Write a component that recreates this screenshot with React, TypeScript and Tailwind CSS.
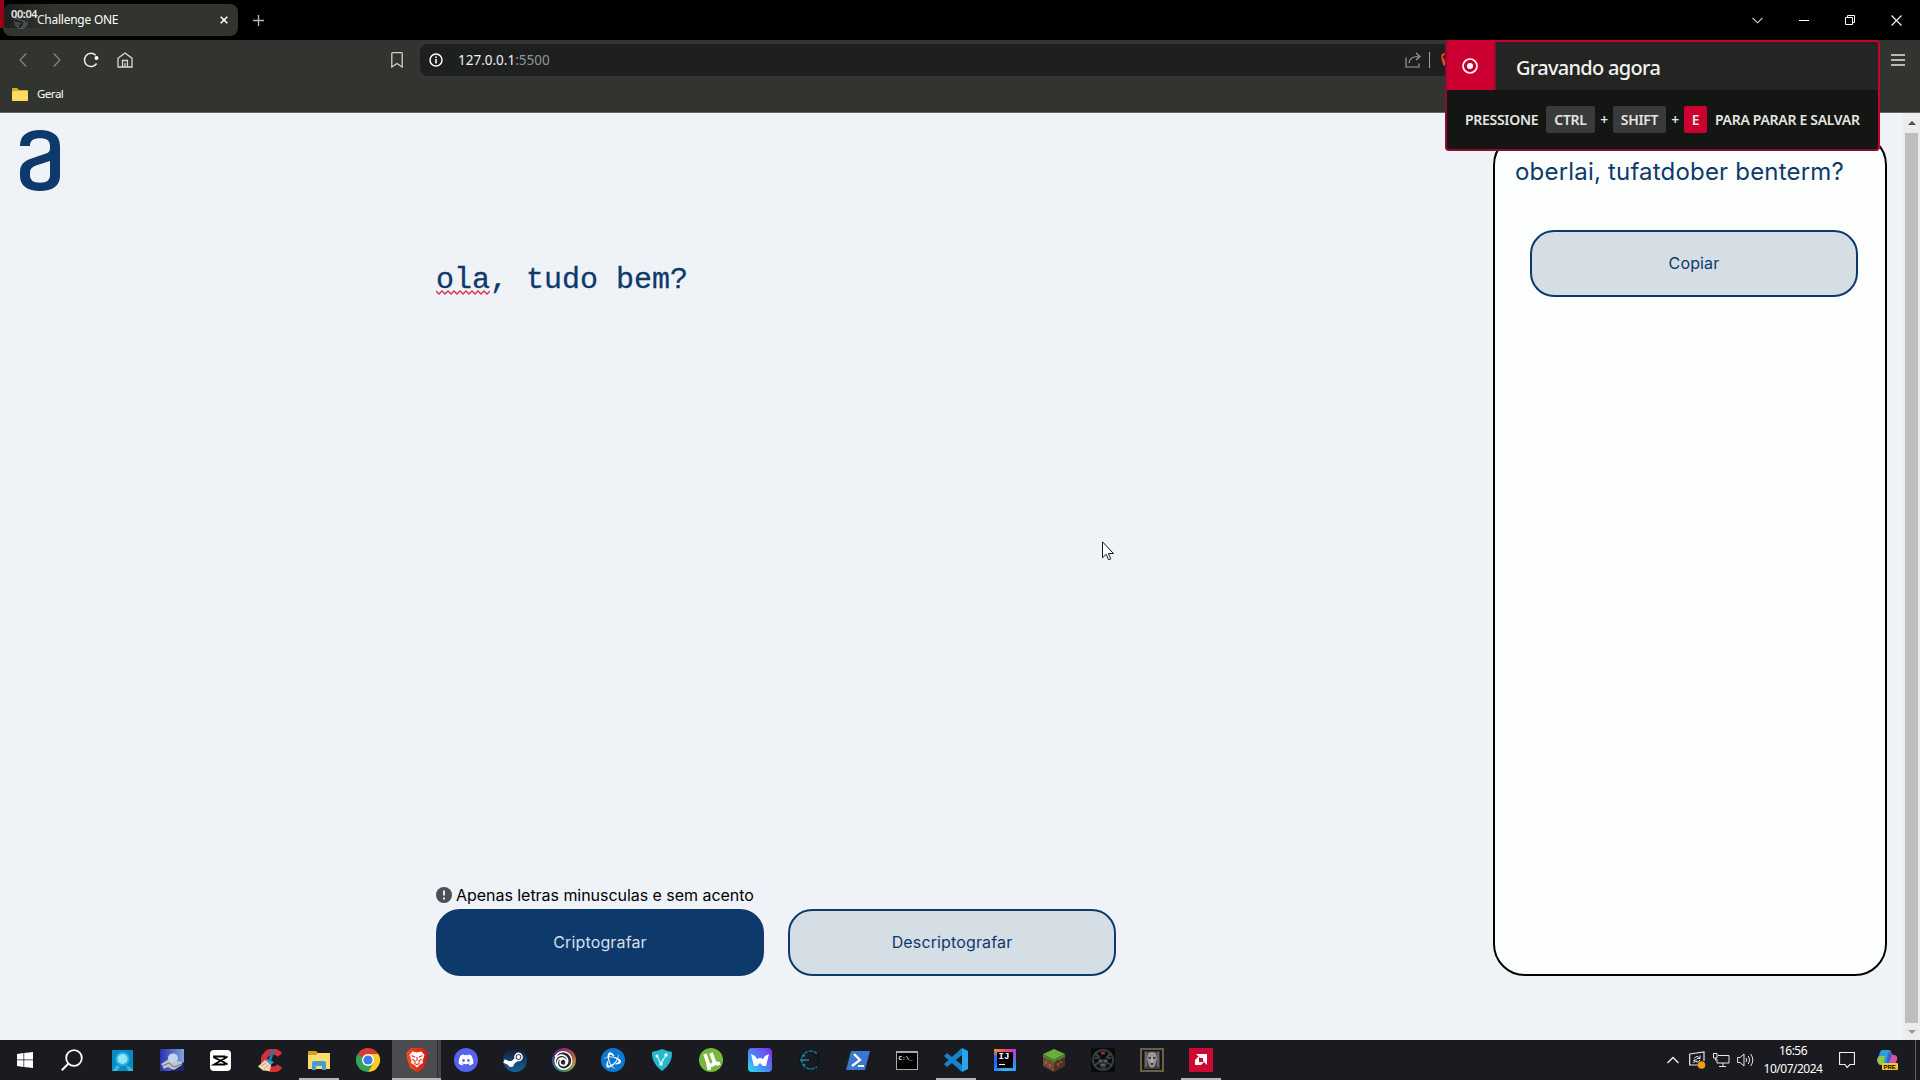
import React from "react";
import { FaDiscord } from "react-icons/fa";
import { SiBrave, SiUbisoft, SiBattledotnet } from "react-icons/si";

function TopBar() {
  return (
    <div className="flex h-10 shrink-0 items-center bg-black text-white">
      <div className="relative ml-[3px] flex h-8 w-[235px] items-center rounded-lg bg-[#323430] pl-[11px]">
        <svg width="14" height="14" viewBox="0 0 14 14" className="mt-1">
          <circle cx="7" cy="7" r="7" fill="#62676b" />
          <path d="M1 6c3-1 4 1 6 1s1 3 0 3-1 2-1 3M8 1c-2 2 0 3 2 3s2 2 3 3" stroke="#2b2d2b" strokeWidth="2" fill="none" />
        </svg>
        <span className="ml-[9px] text-[12px] tracking-[-0.25px]">Challenge ONE</span>
        <svg width="8" height="8" viewBox="0 0 8 8" className="ml-auto mr-[10px]">
          <path d="M.7.7l6.6 6.6M7.3.7L.7 7.3" stroke="#fff" strokeWidth="1.6" />
        </svg>
      </div>
      <svg width="11" height="11" viewBox="0 0 11 11" className="ml-[15px]">
        <path d="M5.5 0v11M0 5.5h11" stroke="#b4b4b4" strokeWidth="1.4" />
      </svg>
      <div className="ml-auto flex items-center">
        <svg width="11" height="7" viewBox="0 0 11 7" className="mr-9">
          <path d="M.5.8l5 5 5-5" stroke="#d8d8d8" fill="none" strokeWidth="1.1" />
        </svg>
        <svg width="10" height="10" viewBox="0 0 10 10" className="mr-9">
          <path d="M0 5.5h10" stroke="#fff" />
        </svg>
        <svg width="10" height="10" viewBox="0 0 10 10" className="mr-9">
          <path d="M.5 2.5h7v7h-7zM2.5 2.500V.5h7v7H7.500" stroke="#fff" fill="none" />
        </svg>
        <svg width="11" height="11" viewBox="0 0 11 11" className="mr-[18px]">
          <path d="M.5.5l10 10M10.500.5l-10 10" stroke="#fff" strokeWidth="1.1" />
        </svg>
      </div>
    </div>
  );
}

function Toolbar() {
  return (
    <div className="h-[73px] shrink-0 border-b border-[#63656a] bg-[#323430] pt-1 text-white">
      <div className="flex h-8 items-center">
        <svg width="8" height="14" viewBox="0 0 8 14" className="ml-[19px]">
          <path d="M7.300.5L1 7l6.300 6.500" stroke="#84868a" fill="none" strokeWidth="1.2" />
        </svg>
        <svg width="8" height="14" viewBox="0 0 8 14" className="ml-[26px]">
          <path d="M.7.5L7 7 .7 13.500" stroke="#84868a" fill="none" strokeWidth="1.2" />
        </svg>
        <svg width="16" height="16" viewBox="0 0 16 16" className="ml-[22px]">
          <path d="M12.700 3.300A6.600 6.600 0 1 0 13.600 11.500" stroke="#eee" fill="none" strokeWidth="1.5" />
          <circle cx="13.500" cy="6" r="2" fill="#fff" />
        </svg>
        <svg width="16" height="16" viewBox="0 0 16 16" className="ml-[18px]">
          <path d="M1 6.200L8 1l7 5.200V15H1zM5.500 15V8.500h5V15M8 15v-4" stroke="#d8d8d8" fill="none" strokeWidth="1.3" />
        </svg>
        <svg width="12" height="16" viewBox="0 0 12 16" className="ml-[258px]">
          <path d="M.8 1.500Q.8.7 1.600.7h8.800q.8 0 .8.8V15L6 11.500.8 15z" stroke="#d0d0d0" fill="none" strokeWidth="1.3" />
        </svg>
        <div className="ml-[17px] flex h-8 w-[1100px] items-center rounded-lg bg-[#1d201f] pl-[9px]">
          <svg width="14" height="14" viewBox="0 0 14 14">
            <circle cx="7" cy="7" r="6" stroke="#fff" fill="none" strokeWidth="1.500" />
            <path d="M7 6v4.500M7 3.500v1.500" stroke="#fff" strokeWidth="1.600" />
          </svg>
          <span className="ml-[15px] text-[13.5px] text-[#f0f0f0]">
            127.0.0.1<span className="text-[#929492]">:5500</span>
          </span>
          <svg width="16" height="16" viewBox="0 0 16 16" className="ml-[855px]">
            <path d="M1 5.500V15h13v-3.500M4 11c.3-4.500 3-6.500 9.500-6.500M11 1l4 3.500L11 8" stroke="#9b9d9b" fill="none" strokeWidth="1.2" />
          </svg>
          <div className="ml-2 h-4 w-px bg-[#a0a0a0]" />
          <SiBrave className="ml-[10px] text-[#f24a1c]" size={16} />
        </div>
        <svg width="14" height="12" viewBox="0 0 14 12" className="ml-auto mr-[15px]">
          <path d="M0 1h14M0 6h14M0 11h14" stroke="#e4e4e4" strokeWidth="1.3" />
        </svg>
      </div>
      <div className="flex h-9 items-center pl-3">
        <svg width="16" height="13" viewBox="0 0 16 13">
          <path d="M0 1q0-1 1-1h4l2 2h8q1 0 1 1v9q0 1-1 1H1q-1 0-1-1z" fill="#d9a929" />
          <path d="M0 4q0-1 1-1h14q1 0 1 1v8q0 1-1 1H1q-1 0-1-1z" fill="#fbdc5e" />
        </svg>
        <span className="ml-[9px] text-[11.500px] tracking-[-0.5px]">Geral</span>
      </div>
    </div>
  );
}

const pill = "flex h-[67px] w-[328px] items-center justify-center rounded-3xl border-2 border-[#0d3a6b] pb-0.5 text-base tracking-[0.14px]";

function Page() {
  return (
    <div className="flex min-h-0 flex-1 bg-[#eff3f8]">
      <div className="w-[436px] pl-5 pt-[17px]">
        <svg width="40" height="61" viewBox="0 0 40 61" fill="#0d3a6b">
          <path
            fillRule="evenodd"
            d="M0 16C0 5 8 0 20 0s20 5 20 16v30c0 10-8 15-20 15S0 56 0 46v-4c0-8 5-11 10-13l16-5.500c3-1 4-2.500 4-5.500v-2c0-5.500-3.500-7.700-10-7.700S10 10.500 10 16zM30 31l-14 4.500c-4 1.500-6 3.500-6 6.500v3c0 5.500 3.500 7.700 10 7.700s10-2.200 10-7.700z"
          />
        </svg>
      </div>
      <main className="flex w-[680px] flex-col font-['Inter',sans-serif]">
        <div className="mt-[149px] whitespace-pre font-['Liberation_Mono',monospace] text-[30px] leading-9 text-[#0d3a6b] [-webkit-text-stroke:0.3px_#0d3a6b]">
          <span className="relative inline-block">
            ola
            <svg className="absolute left-0 top-[28px]" width="54" height="5" viewBox="0 0 54 5">
              <path d="M0 1l3 3 3-3 3 3 3-3 3 3 3-3 3 3 3-3 3 3 3-3 3 3 3-3 3 3 3-3 3 3 3-3 3 3 3-3" stroke="#d2344a" fill="none" strokeWidth="1.300" />
            </svg>
          </span>
          , tudo bem?
        </div>
        <div className="mt-auto flex h-7 items-center text-base tracking-[-0.04px] text-black">
          <svg width="16" height="16" viewBox="0 0 16 16" className="mr-1">
            <circle cx="8" cy="8" r="8" fill="#495057" />
            <path d="M8 3.500v5M8 10.500v2" stroke="#eff3f8" strokeWidth="1.900" />
          </svg>
          Apenas letras minusculas e sem acento
        </div>
        <div className="mb-16 flex gap-6">
          <button className={`${pill} bg-[#0d3a6b] text-[#d8dfe8]`}>Criptografar</button>
          <button className={`${pill} bg-[#d5dde5] text-[#0d3a6b]`}>Descriptografar</button>
        </div>
      </main>
      <section className="mb-16 ml-auto mr-4 mt-5 flex w-[394px] flex-col rounded-[32px] border-2 border-black bg-[#fdfffe] pt-[21px] font-['Inter',sans-serif] text-[#0d3a6b]">
        <p className="whitespace-nowrap pl-5 text-2xl leading-8 tracking-[0.19px]">oberlai, tufatdober benterm?</p>
        <button className={`${pill} ml-[35px] mt-[42px] bg-[#d5dde5]`}>Copiar</button>
      </section>
      <div className="flex w-[17px] flex-col items-center bg-[#ebedec]">
        <div className="flex h-5 items-center">
          <svg width="8" height="4" viewBox="0 0 8 4"><path d="M4 0l4 4H0z" fill="#4d4f4e" /></svg>
        </div>
        <div className="w-[13px] flex-1 bg-[#bcbfbc]" />
        <div className="flex h-[17px] items-center">
          <svg width="8" height="4" viewBox="0 0 8 4"><path d="M0 0h8L4 4z" fill="#9a9c9b" /></svg>
        </div>
      </div>
    </div>
  );
}

function Disc({ children, className }: { children: React.ReactNode; className: string }) {
  return <div className={`flex size-6 items-center justify-center text-white ${className}`}>{children}</div>;
}

const icons: { node: React.ReactNode; state?: "open" | "active" }[] = [
  { node: <svg width="16" height="16" viewBox="0 0 16 16" fill="#fff"><path d="M0 2l6.500-1v6.500H0zM7.200.9L16 0v7.500H7.200zM0 8.200h6.500V15L0 14zM7.200 8.200H16V16l-8.800-1z" /></svg> },
  { node: <svg width="22" height="22" viewBox="0 0 22 22" className="-translate-x-0.5"><circle cx="13" cy="9" r="7.800" stroke="#fff" strokeWidth="1.800" fill="none" /><path d="M7.500 14.500L.8 21.200" stroke="#fff" strokeWidth="2" /></svg> },
  { node: <svg width="21" height="21" viewBox="0 0 21 21"><path d="M0 0h21v21H0z" fill="#078bc0" /><path d="M0 21l5-6 3 2-3 4zM14 15l7 4v2h-5z" fill="#35b7dd" /><circle cx="10.500" cy="9" r="7" fill="#27b5df" /><circle cx="10.500" cy="9" r="5" fill="#8fe4f5" /></svg> },
  { node: <svg width="24" height="22" viewBox="0 0 24 22"><defs><linearGradient id="drive"><stop stopColor="#2c2fae" /><stop offset="1" stopColor="#7fa5dc" /></linearGradient></defs><path d="M0 0h24v22H0z" fill="url(#drive)" /><path d="M10 22l14-9v9z" fill="#1c2468" /><path d="M1 15l8-5 13 3v3l-8 5-6-3-4 2z" fill="#bfc3ca" /><path d="M2 17l7-3 5 4 8-3" stroke="#6b7080" fill="none" /><ellipse cx="13" cy="9" rx="5" ry="4.500" fill="#c6d5ee" /></svg> },
  { node: <svg width="21" height="21" viewBox="0 0 21 21"><rect width="21" height="21" rx="4" fill="#fff" /><path d="M4 6.500h10.500v2L4 14.500h10.500v-2L4 7.500zM14.500 8.500l3-2M14.500 12.500l3 2" stroke="#000" strokeWidth="1.800" fill="none" /></svg> },
  { node: <svg width="24" height="23" viewBox="0 0 24 23"><path d="M22 6A9 9 0 1 0 22 17" stroke="#d2323a" strokeWidth="6" fill="none" /><path d="M15 1l-3 10" stroke="#2278a9" strokeWidth="3" /><path d="M9 10l7 3-3 3-5-4z" fill="#399bcd" /><path d="M7 11l6 5-1 6-7-.5-5-4z" fill="#f2d8b4" /><path d="M3 17l5-3M6 20l4-4" stroke="#c99f79" /></svg> },
  { state: "open", node: <svg width="22" height="19" viewBox="0 0 22 19"><path d="M0 0h8l2 2h12v16H0z" fill="#d89b1f" /><path d="M0 4h8l2-2h12v16H0z" fill="#fddc6c" /><path d="M4 19v-7q0-2 2-2h10q2 0 2 2v7h-4v-4H8v4z" fill="#409fd5" /></svg> },
  { node: <svg width="24" height="24" viewBox="0 0 24 24"><path d="M12 12L1.600 6A12 12 0 0 1 22.400 6z" fill="#db3b30" /><path d="M12 12L1.600 6A12 12 0 0 0 12 24l5-9z" fill="#35a352" /><path d="M12 6h10.400A12 12 0 0 1 12 24l5.200-9z" fill="#fccb24" /><circle cx="12" cy="12" r="6" fill="#fff" /><circle cx="12" cy="12" r="4.600" fill="#3c7be8" /></svg> },
  { state: "active", node: <svg width="22" height="24" viewBox="0 0 22 24"><defs><linearGradient id="lion"><stop stopColor="#f4511e" /><stop offset="1" stopColor="#d9160f" /></linearGradient></defs><path d="M5 0h12l2 2 3 3-1 3 .5 1L18 20l-7 4-7-4L.5 9 1 8 0 5l3-3z" fill="url(#lion)" /><path d="M6.500 3.500l4.500 1 4.500-1L18.500 7l-2 5.500.5 2.500-3.500 2-2.500 2.500L8.500 17 5 15l.5-2.500-2-5.500z" fill="#fff" /><path d="M5.500 7.500l3.700 1.700M16.500 7.500l-3.700 1.700M6.500 11l2.500 2v2M15.500 11L13 13v2M8.500 15.500l2.500 1 2.500-1M11 9v4" stroke="#e6391b" fill="none" strokeWidth="1.200" /></svg> },
  { node: <Disc className="rounded-full bg-[#5662f0]"><FaDiscord size={16} /></Disc> },
  { node: <svg width="24" height="24" viewBox="0 0 24 24"><defs><linearGradient id="valve" x2="0" y2="1"><stop stopColor="#141a35" /><stop offset="1" stopColor="#12659a" /></linearGradient></defs><circle cx="12" cy="12" r="12" fill="url(#valve)" /><path d="M1 13l7 3 6-5" stroke="#fff" strokeWidth="4" fill="none" /><circle cx="8" cy="16" r="3" fill="#fff" /><circle cx="15.500" cy="9" r="3.600" stroke="#fff" strokeWidth="1.600" fill="#182545" /><circle cx="15.500" cy="9" r="2" fill="#fff" /></svg> },
  { node: <Disc className="rounded-full bg-[conic-gradient(#9c2f72,#b3543b,#b69a3d,#3a8c55,#287a9a,#49307f,#9c2f72)]"><div className="flex size-[19px] items-center justify-center rounded-full bg-[#25262b]"><SiUbisoft size={19} /></div></Disc> },
  { node: <Disc className="rounded-full bg-[#0d78d2]"><SiBattledotnet size={17} /></Disc> },
  { node: <svg width="22" height="22" viewBox="0 0 22 22"><path d="M1 3Q6 2 11 0q5 2 10 3 1 11-10 19Q0 14 1 3z" fill="#27b8cf" /><path d="M6 7l4 8 5-9M10 15l2-5" stroke="#d2f3f5" fill="none" strokeWidth="1.200" /><circle cx="6" cy="7" r="1.500" fill="#eaffff" /><circle cx="15" cy="6" r="1.700" fill="#eaffff" /><circle cx="10" cy="15" r="1.700" fill="#eaffff" /></svg> },
  { node: <svg width="24" height="24" viewBox="0 0 24 24"><circle cx="12" cy="12" r="12" fill="#76b83f" /><path d="M6 6l3 9q1 3 4 2 3-1 2-4l-3-8M15 13q2 4 6 2M8.500 14l2 8" stroke="#fff" strokeWidth="3.600" fill="none" /></svg> },
  { node: <Disc className="rounded bg-linear-to-tr from-[#26e0ee] via-[#4a7cf2] to-[#7a10ea]"><svg width="18" height="13" viewBox="0 0 18 13"><path d="M0 0l4 2 2 3q3-2 6 0l2-3 4-2-3 12h-3L9 9l-3 3H3z" fill="#fff" /></svg></Disc> },
  { node: <svg width="22" height="22" viewBox="0 0 22 22"><circle cx="12" cy="11" r="9" stroke="#07161f" strokeWidth="4" fill="none" strokeDasharray="3 2" /><path d="M19 4.500A9 9 0 1 0 19 17.500" stroke="#1f6580" strokeWidth="2" fill="none" strokeDasharray="4 1" /><path d="M2 11h9M5 5.500l2 2M5 17l2-2" stroke="#2585a8" strokeWidth="1.500" /></svg> },
  { node: <svg width="24" height="19" viewBox="0 0 24 19"><path d="M5 0h19l-5 19H0z" fill="#3b76cf" /><path d="M8 3l6 6-8 6M12 15h6" stroke="#fff" strokeWidth="2.200" fill="none" /></svg> },
  { node: <div className="h-[19px] w-[22px] border border-[#aaa] border-t-2 bg-black pl-0.5 pt-0.5 text-left font-['Liberation_Mono',monospace] text-[6px] font-bold leading-[7px] text-white">C:\_</div> },
  { state: "open", node: <svg width="24" height="24" viewBox="0 0 24 24"><path d="M18 0l6 3v18l-6 3z" fill="#2aa5ed" /><path d="M18 0v7L3 19l-3-3zM0 8l3-3 15 12v7z" fill="#1584c8" /></svg> },
  { node: <div className="flex size-[22px] items-center justify-center bg-[conic-gradient(#f0407c,#b040d0_15%,#2f8df5_30%,#38b4fa_50%,#1a6cf0_70%,#3560f0_80%,#f98a2c_88%,#f0407c)]"><div className="h-4 w-4 bg-black pl-0.5 pt-px font-['Liberation_Mono',monospace] text-[9px] font-bold leading-[9px] text-white">IJ<div className="mt-0.5 h-px w-1.5 bg-white" /></div></div> },
  { node: <svg width="22" height="23" viewBox="0 0 22 23"><path d="M11 0l11 5-11 6L0 5z" fill="#6bac3e" /><path d="M0 5l11 6v12L0 17z" fill="#72492f" /><path d="M22 5l-11 6v12l11-6z" fill="#50321f" /><path d="M0 5l11 6 11-6v3l-3 1-2 2-3 0-3 3-3-3-3 0-2-2-3-1z" fill="#4c812d" /><path d="M3 12v3M7 15v3M15 14v3M18 12v2" stroke="#966c48" strokeWidth="1.500" /></svg> },
  { node: <svg width="24" height="24" viewBox="0 0 24 24"><path d="M0 0h24v24H0z" fill="#0a0b0c" /><circle cx="12" cy="12" r="10" stroke="#3b3c3a" strokeWidth="2" fill="none" /><path d="M4 5l5 5M20 5l-5 5M3 18l5-4M21 18l-5-4" stroke="#45453f" strokeWidth="2" fill="none" /><path d="M10 5h4" stroke="#a8283f" strokeWidth="2.500" /><path d="M4 10h3M17 10h3" stroke="#2a477c" strokeWidth="2" /><path d="M7 11h10l-1 6-2 4h-4l-2-4z" fill="#30332f" /><path d="M8 13h3M13 13h3M10 17h4" stroke="#8b8d87" /></svg> },
  { node: <svg width="24" height="24" viewBox="0 0 24 24"><path d="M1 1h22v22H1z" fill="#171514" stroke="#6b6044" strokeWidth="2" /><path d="M4 3h16v18H4z" fill="#3a3b3d" /><path d="M8 5q4-2 8 0l1 6-2 7-3 2-3-2-2-7z" fill="#989593" /><path d="M6 4v15M18 4v15" stroke="#777775" strokeWidth="1.500" /><path d="M8.500 10h2.500M13 10h2.500M10.500 16h3" stroke="#451d20" strokeWidth="1.700" /><path d="M11.500 9h1v5h-1z" fill="#ccc" /></svg> },
  { state: "open", node: <svg width="24" height="24" viewBox="0 0 24 24"><path d="M0 0h24v24H0z" fill="#cb0933" /><path d="M7 6h11v11l-4-4v-3h-3zM6 12l4-4v6h5l-3 3H6z" fill="#fff" /></svg> },
];

function Taskbar() {
  return (
    <div className="flex h-10 shrink-0 items-stretch bg-[#1a1b20] text-white">
      {icons.map((icon, i) => (
        <div key={i} className={`relative flex w-[49px] items-center justify-center ${icon.state === "active" ? "bg-[linear-gradient(90deg,#4b4c4f_45px,#2c2d31_45px,#2c2d31_46px,#414246_46px)]" : ""}`}>
          {icon.node}
          {icon.state && <div className={`absolute bottom-0 h-0.5 bg-[#b6b6b6] ${icon.state === "active" ? "w-full" : "w-10"}`} />}
        </div>
      ))}
      <div className="ml-auto flex items-center">
        <svg width="12" height="8" viewBox="0 0 12 8" className="mr-[10px]"><path d="M.5 7L6 1.500 11.500 7" stroke="#eee" strokeWidth="1.400" fill="none" /></svg>
        <svg width="17" height="18" viewBox="0 0 17 18" className="mr-[7px]"><path d="M.7 3L15 1v9M.7 3v11h8" stroke="#e8e8e8" strokeWidth="1.200" fill="none" /><path d="M5 7.500q3-4 6 0M11 4.500v3H8M11 9q-3 4-6 0M5 12V9h3" stroke="#e8e8e8" fill="none" /><circle cx="12.500" cy="14" r="3.800" fill="#f59c13" /></svg>
        <svg width="17" height="14" viewBox="0 0 17 14" className="mr-[7px]"><path d="M5 2.500h11v7.500H4V6M10 10v3M6 13.500h7M.5.500h3.500V5H.5zM2.500 5v2.500" stroke="#e8e8e8" fill="none" /></svg>
        <svg width="17" height="14" viewBox="0 0 17 14" className="mr-[9px]"><path d="M.6 4.500h2.500L7 1v12L3.100 9.500H.6zM9 5q1.500 2 0 4M11.300 3q3 4 0 8M13.600 1q4.500 6 0 12" stroke="#e8e8e8" fill="none" /></svg>
        <div className="w-[60px] whitespace-nowrap text-center text-[12px] leading-[18px] tracking-[-0.5px]"><div>16:56</div><div>10/07/2024</div></div>
        <svg width="16" height="16" viewBox="0 0 16 16" className="ml-[16px]"><path d="M.5.5h15v12H11L8 15.500 6 12.500H.5z" stroke="#eee" strokeWidth="1.200" fill="none" /></svg>
        <svg width="21" height="20" viewBox="0 0 21 20" className="ml-[22px]">
          <path d="M5 0h7q2 0 2 3l-3 9q-1 3-4 3H4q-3-1-3-4Q2 1 5 0z" fill="#27a0db" />
          <path d="M2 6h6l-2 9H3Q0 13 0 9z" fill="#91c84b" />
          <path d="M13 1l3 4h2q3 1 2 5l-2 4h-8l3-9z" fill="#d452a8" />
          <path d="M12 1l3 4-3 8H9z" fill="#3461d0" />
          <rect x="5" y="13" width="16" height="7" rx="1" fill="#f6c52e" />
          <text x="6.500" y="19" fontSize="6" fontWeight="bold" fontFamily="Liberation Sans" fill="#000">PRE</text>
        </svg>
        <div className="ml-[17px] mr-1 h-10 w-px bg-[#5d5e62]" />
      </div>
    </div>
  );
}

function Key({ children, className }: { children: React.ReactNode; className: string }) {
  return <span className={`flex h-[27px] items-center justify-center rounded-[2px] ${className}`}>{children}</span>;
}

function RecordingToast() {
  return (
    <div className="absolute left-[1445px] top-10 flex h-[111px] w-[435px] flex-col overflow-hidden rounded border-2 border-[#c9002f] border-b-[#8e0a31] border-l-[#8e0a31] bg-[#141613] text-[#f2f2f2]">
      <div className="flex h-12 bg-[#242523]">
        <div className="-ml-0.5 flex w-[51px] items-center justify-center border-r-2 border-[#8e0a31] bg-[#cb0030]">
          <svg width="16" height="16" viewBox="0 0 16 16"><circle cx="8" cy="8" r="7" stroke="#fff" strokeWidth="1.700" fill="none" /><circle cx="8" cy="8" r="3" fill="#fff" /></svg>
        </div>
        <span className="ml-5 mt-3 whitespace-nowrap text-[20px] font-medium leading-7 tracking-[-0.7px]">Gravando agora</span>
      </div>
      <div className="flex h-[60px] items-center whitespace-nowrap pl-[18px] text-[14px] font-semibold tracking-[-0.3px] text-[#e4e6e3]">
        <span className="w-[81px]">PRESSIONE</span>
        <Key className="w-[49px] bg-[#393b3a]">CTRL</Key>
        <span className="w-[18px] text-center">+</span>
        <Key className="w-[53px] bg-[#393b3a]">SHIFT</Key>
        <span className="w-[18px] text-center">+</span>
        <Key className="w-[23px] bg-[#cb0030]">E</Key>
        <span className="ml-2">PARA PARAR E SALVAR</span>
      </div>
    </div>
  );
}

export default function App() {
  return (
    <div className="relative flex h-[1080px] w-[1920px] flex-col overflow-hidden font-['Noto_Sans',sans-serif]">
      <TopBar />
      <Toolbar />
      <Page />
      <Taskbar />
      <RecordingToast />
      <div className="absolute left-0 top-0 flex h-7 w-[54px] border-l-4 border-[#9c0018] bg-linear-to-r from-black/40 to-transparent pl-[7px] pt-1.5 text-[11px] font-semibold leading-4 tracking-[-0.4px] text-[#e8e8e8]">00:04</div>
      <svg className="absolute left-[1102px] top-[541px]" width="12" height="20" viewBox="0 0 12 20">
        <path d="M.5.800v16l3.700-3.500 2.400 5.500 2.200-1-2.400-5.300h5.100z" fill="#fff" stroke="#171923" />
      </svg>
    </div>
  );
}
